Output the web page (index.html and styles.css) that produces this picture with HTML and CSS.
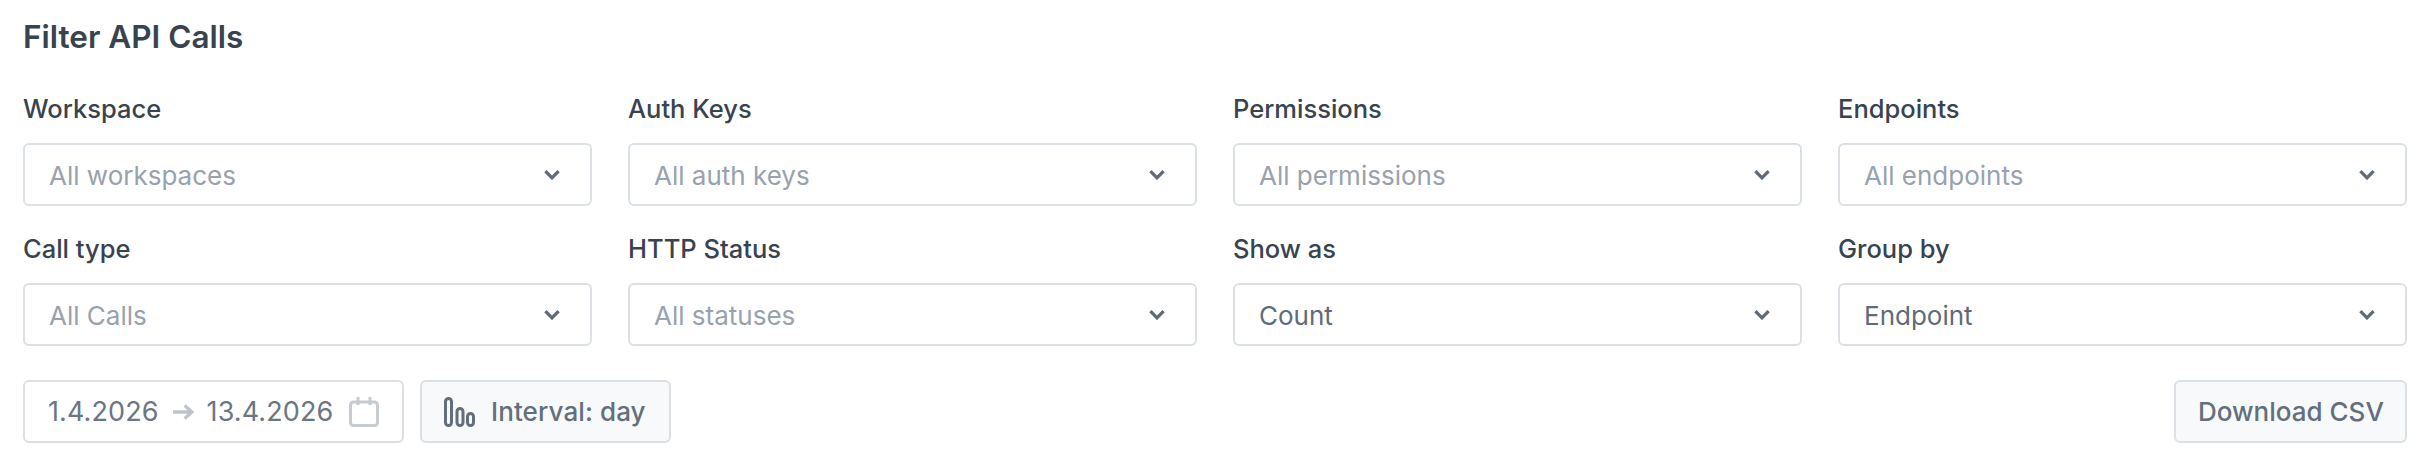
FILE: index.html
```html
<!DOCTYPE html>
<html lang="en">
<head>
<meta charset="utf-8">
<title>Filter API Calls</title>
<link rel="stylesheet" href="styles.css">
</head>
<body>
<main class="page">
  <h1 class="title">Filter API Calls</h1>
  <div class="grid">
    <div class="field"><label class="label">Workspace</label><div class="select placeholder"><span>All workspaces</span><svg class="chev" viewBox="0 0 16 10"><path d="M2 2l6 6 6-6"/></svg></div></div>
    <div class="field"><label class="label">Auth Keys</label><div class="select placeholder"><span>All auth keys</span><svg class="chev" viewBox="0 0 16 10"><path d="M2 2l6 6 6-6"/></svg></div></div>
    <div class="field"><label class="label">Permissions</label><div class="select placeholder"><span>All permissions</span><svg class="chev" viewBox="0 0 16 10"><path d="M2 2l6 6 6-6"/></svg></div></div>
    <div class="field"><label class="label">Endpoints</label><div class="select placeholder"><span>All endpoints</span><svg class="chev" viewBox="0 0 16 10"><path d="M2 2l6 6 6-6"/></svg></div></div>
    <div class="field"><label class="label">Call type</label><div class="select placeholder"><span>All Calls</span><svg class="chev" viewBox="0 0 16 10"><path d="M2 2l6 6 6-6"/></svg></div></div>
    <div class="field"><label class="label">HTTP Status</label><div class="select placeholder"><span>All statuses</span><svg class="chev" viewBox="0 0 16 10"><path d="M2 2l6 6 6-6"/></svg></div></div>
    <div class="field"><label class="label">Show as</label><div class="select"><span>Count</span><svg class="chev" viewBox="0 0 16 10"><path d="M2 2l6 6 6-6"/></svg></div></div>
    <div class="field"><label class="label">Group by</label><div class="select"><span>Endpoint</span><svg class="chev" viewBox="0 0 16 10"><path d="M2 2l6 6 6-6"/></svg></div></div>
  </div>
  <div class="actions">
    <div class="dates">
      <span>1.4.2026</span>
      <svg class="arrow" viewBox="0 0 20 16"><path d="M1 8h17M11.500 2l6.500 6-6.500 6"/></svg>
      <span>13.4.2026</span>
      <svg class="cal" viewBox="0 0 30 30"><rect x="1.500" y="5" width="27" height="23.500" rx="3"/><path d="M9 0v8M21 0v8"/></svg>
    </div>
    <button class="btn interval"><svg class="bars" viewBox="0 0 31 30"><rect x="1.500" y="1.500" width="6" height="27" rx="3"/><rect x="13" y="11.500" width="6" height="17" rx="3"/><rect x="23.500" y="16.500" width="6" height="12" rx="3"/></svg>Interval: day</button>
    <button class="btn download">Download CSV</button>
  </div>
</main>
</body>
</html>
```

FILE: styles.css
```css
* { box-sizing: border-box; }
html, body { margin: 0; padding: 0; background: #fff; }
body { font-family: Inter, "Liberation Sans", sans-serif; color: #384350; }
.page { padding: 20px 15px 32px 23px; }
.title { margin: 0 0 41px; font-size: 31.500px; line-height: 34px; font-weight: 600; color: #384350; }
.grid { display: grid; grid-template-columns: repeat(4, 1fr); column-gap: 36px; row-gap: 29px; }
.field { display: flex; flex-direction: column; }
.label { font-size: 25.500px; line-height: 28px; font-weight: 500; margin-bottom: 20px; color: #384350; }
.select { height: 63px; border: 2px solid #dbe0e5; border-radius: 6px; display: flex; align-items: center; justify-content: space-between; padding: 1px 29px 0 24px; font-size: 26px; color: #5f6b78; background: #fff; }
.placeholder { color: #98a2ad; }
.chev { width: 18px; height: 11px; fill: none; stroke: #5f6b78; stroke-width: 3; margin-bottom: 2px; }
.actions { display: flex; align-items: center; gap: 16px; margin-top: 34px; }
.dates { height: 63px; width: 381px; border: 2px solid #dbe0e5; border-radius: 6px; display: flex; align-items: center; gap: 13px; padding: 0 23px; font-size: 27px; letter-spacing: 0.1px; color: #6a7683; white-space: nowrap; }
.arrow { width: 22px; height: 18px; fill: none; stroke: #bcc3ca; stroke-width: 3; flex: none; }
.cal { width: 30px; height: 30px; fill: none; stroke: #c5cbd1; stroke-width: 3; flex: none; margin-left: 3px; }
.btn { height: 63px; border: 2px solid #dbe0e5; border-radius: 6px; background: #f7f9fb; font-family: inherit; font-size: 26px; font-weight: 500; color: #636f7c; display: flex; align-items: center; padding: 0 22px; white-space: nowrap; }
.interval { gap: 16px; width: 251px; letter-spacing: 0.1px; }
.bars { width: 31px; height: 30px; fill: none; stroke: #636f7c; stroke-width: 3; flex: none; }
.download { margin-left: auto; width: 233px; }
```
